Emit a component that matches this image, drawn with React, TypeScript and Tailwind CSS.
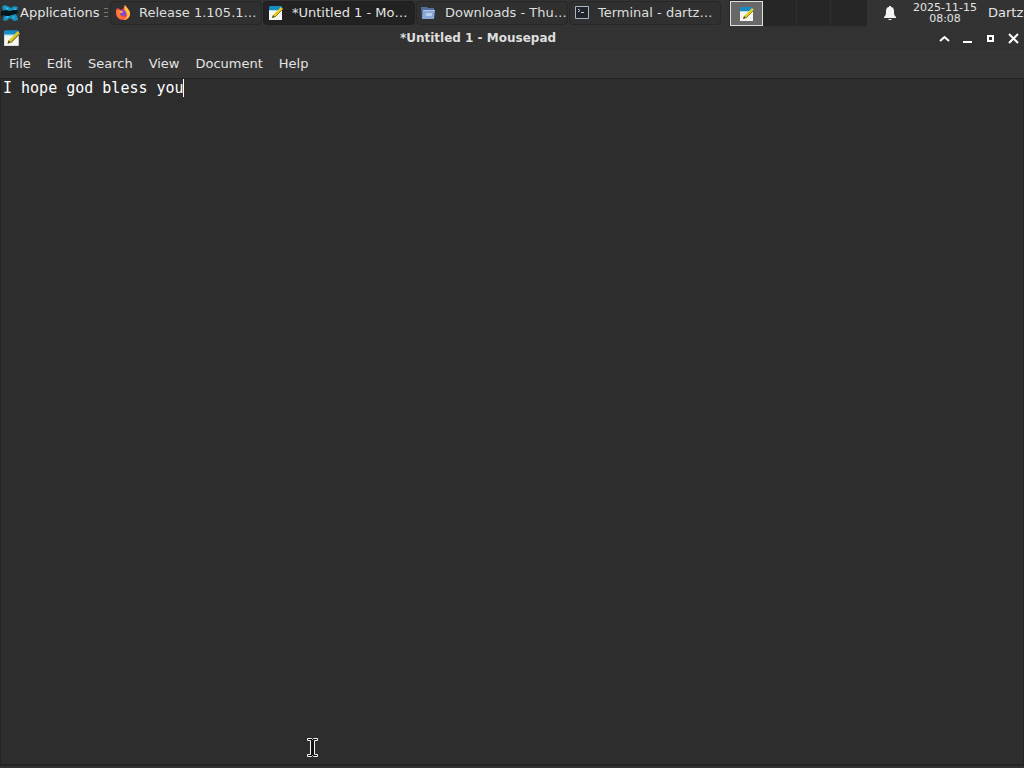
import { useState, type ReactNode } from "react";

function XfceLogo() {
  return (
    <svg width="18" height="18" viewBox="0 0 18 18" className="shrink-0" aria-hidden="true">
      <path d="M3 1l4 1 3 2 3-2 4 1-1 4-2 2 2 3 1 4-4 1-4-3-4 3-3-1 1-4 1-3-2-3-1-3z" fill="#1792bd" />
      <path d="M1 7l4-1 4 1 3-1 4 0 1 2-2 2-4 1-3 1-3 0-3-1-3 1 1-3z" fill="#06141c" />
      <path d="M4 3l3 1 1 2-3-1zM14 4l1 2-3 0zM5 14l1-2 2 0-1 2zM12 12l2 2-2 0z" fill="#3fc0e8" />
    </svg>
  );
}

function FirefoxLogo() {
  return (
    <svg width="16" height="16" viewBox="0 0 16 16" className="shrink-0" aria-hidden="true">
      <path d="M2 3l1 1 1-1 1 2 3-1 2-4 3 4 2 3v2c0 4-3 6-7 6s-7-3-7-7c0-2 0-3 1-5z" fill="#f43f5c" />
      <path d="M10 0l3 4c2 2 2 4 2 6-1 3-4 5-7 5 4-2 5-5 3-8-2-2-2-4-1-7z" fill="#ffc23a" />
      <path d="M2 4l2 1 3 1-2 2c0 4 4 5 6 3-2 4-7 4-9 0-1-3-1-5 0-7z" fill="#ff7830" />
      <circle cx="8" cy="8" r="3" fill="#7d4fd0" />
      <path d="M4 6l4 0-1 2-2 0z" fill="#ffb04a" />
    </svg>
  );
}

function NotepadIcon({ size = 16 }: { size?: number }) {
  return (
    <svg width={size} height={size} viewBox="0 0 16 16" className="shrink-0" aria-hidden="true">
      <path d="M1 2h13v13H1z" fill="#f7f7f2" />
      <path d="M2 1h11l1 1v3H1V2z" fill="#168bc4" />
      <path d="M1 5h13v1H1z" fill="#a9dcec" />
      <path d="M4 13l1-3 8-8 2 2-8 8z" fill="#e3cb2b" />
      <path d="M7 12l8-8" stroke="#8b7c22" />
      <path d="M4 13l1-3 2 2z" fill="#45432a" />
    </svg>
  );
}

function FolderIcon() {
  return (
    <svg width="16" height="16" viewBox="0 0 16 16" className="shrink-0" aria-hidden="true">
      <path d="M0 2h6l1 1h6v10H1z" fill="#526e9c" />
      <path d="M2 5h12l-1 9H1z" fill="#87a6d5" />
      <path d="M2 5h12v1H2z" fill="#b3c7e6" />
      <path d="M5 8h6v3H5z" fill="#b7cdec" />
    </svg>
  );
}

function TerminalIcon() {
  return (
    <svg width="16" height="16" viewBox="0 0 16 16" className="shrink-0" aria-hidden="true">
      <path d="M1.500 1.500h13v12h-13z" fill="#20252d" stroke="#aab4c4" />
      <path d="M4 4l2 1.500L4 7M7 7.500h3" fill="none" stroke="#c5cedb" />
    </svg>
  );
}

function BellIcon() {
  return (
    <svg width="14" height="16" viewBox="0 0 14 16" fill="#f4f4f4" aria-hidden="true">
      <path d="M6 1h2v1c2 0 3 2 3 4 0 3 0 4 2 6v1H1v-1c2-2 2-3 2-6 0-2 1-4 3-4zM5 14h4l-1 1H6z" />
    </svg>
  );
}

type TaskButtonProps = {
  icon: ReactNode;
  label: string;
  active?: boolean;
};

function TaskButton({ icon, label, active = false }: TaskButtonProps) {
  return (
    <button
      type="button"
      aria-pressed={active}
      className={
        active
          ? "flex h-6 min-w-0 flex-1 items-center gap-2 rounded-sm border border-[#1f1f1f] bg-[#222222] pl-1 text-[#e4e4e4]"
          : "flex h-6 min-w-0 flex-1 items-center gap-2 rounded-sm border border-[#272727] bg-[#303030] pl-1 text-[#dedede]"
      }
    >
      {icon}
      <span className="whitespace-nowrap">{label}</span>
    </button>
  );
}

function Panel() {
  return (
    <header className="flex h-[26px] shrink-0 items-center overflow-hidden bg-[#333333]">
      <button type="button" className="flex w-[103px] shrink-0 items-center gap-px pl-px">
        <XfceLogo />
        <span>Applications</span>
      </button>
      <svg width="6" height="12" viewBox="0 0 6 12" className="mr-px shrink-0" aria-hidden="true">
        <path d="M1 1.500h4M1 5.500h4M1 9.500h4" stroke="#777" />
      </svg>
      <nav aria-label="Open windows" className="flex max-w-[611px] min-w-0 flex-1 gap-px">
        <TaskButton icon={<FirefoxLogo />} label="Release 1.105.1…" />
        <TaskButton icon={<NotepadIcon />} label="*Untitled 1 - Mo…" active />
        <TaskButton icon={<FolderIcon />} label="Downloads - Thu…" />
        <TaskButton icon={<TerminalIcon />} label="Terminal - dartz…" />
      </nav>
      <div className="ml-2 flex h-full shrink-0 items-center bg-[#262626] pl-px">
        <button
          type="button"
          aria-label="Workspace 1"
          className="flex h-[25px] w-[33px] items-center justify-center self-end border border-[#dedede] bg-[#686868]"
        >
          <NotepadIcon />
        </button>
        <button type="button" aria-label="Workspace 2" className="h-full w-[34px] border-r border-[#2f2f2f]" />
        <button type="button" aria-label="Workspace 3" className="h-full w-[34px] border-r border-[#2f2f2f]" />
        <button type="button" aria-label="Workspace 4" className="h-full w-[36px]" />
      </div>
      <button type="button" aria-label="Notifications" className="ml-4 shrink-0">
        <BellIcon />
      </button>
      <time
        dateTime="2025-11-15T08:08"
        className="ml-4 w-16 shrink-0 text-center text-[11px] leading-[11px] whitespace-nowrap"
      >
        2025-11-15
        <br />
        08:08
      </time>
      <button type="button" className="ml-[11px] shrink-0">
        Dartz
      </button>
    </header>
  );
}

function TitleBar() {
  return (
    <div className="flex h-6 shrink-0 items-center bg-[#323232] pl-[3px]">
      <NotepadIcon size={18} />
      <h1 className="min-w-0 flex-1 pl-[2px] text-center text-[12px] font-bold text-[#dedede]">
        *Untitled 1 - Mousepad
      </h1>
      <div className="flex shrink-0 text-white">
        <button type="button" aria-label="Shade" className="flex w-[23px] justify-center">
          <svg width="11" height="11" viewBox="0 0 11 11" fill="none" stroke="currentColor" strokeWidth="2">
            <path d="M1 8l4.500-4L10 8" />
          </svg>
        </button>
        <button type="button" aria-label="Minimize" className="flex w-[23px] justify-center">
          <svg width="11" height="11" viewBox="0 0 11 11">
            <path d="M1 8h9v2H1z" fill="currentColor" />
          </svg>
        </button>
        <button type="button" aria-label="Maximize" className="flex w-[23px] justify-center">
          <svg width="11" height="11" viewBox="0 0 11 11" fill="none" stroke="currentColor" strokeWidth="2">
            <path d="M3 3h5v5H3z" />
          </svg>
        </button>
        <button type="button" aria-label="Close" className="flex w-[22px] justify-center">
          <svg width="11" height="11" viewBox="0 0 11 11" fill="none" stroke="currentColor" strokeWidth="2">
            <path d="M1 1l9 9M10 1l-9 9" />
          </svg>
        </button>
      </div>
    </div>
  );
}

const menus = ["File", "Edit", "Search", "View", "Document", "Help"];

function MenuBar() {
  return (
    <nav aria-label="Menu" className="flex h-7 shrink-0 items-center bg-[#353535] pb-px pl-px">
      {menus.map((menu) => (
        <button key={menu} type="button" className="px-2">
          {menu}
        </button>
      ))}
    </nav>
  );
}

function TextCursor() {
  return (
    <svg
      width="11"
      height="21"
      viewBox="0 0 11 21"
      className="pointer-events-none absolute bottom-[6px] left-[306px]"
      aria-hidden="true"
    >
      <path d="M.5 1.500h4l1 1 1-1h4v2h-3v14h3v2h-4l-1-1-1 1h-4v-2h3v-14h-3z" fill="#111" stroke="#f4f4f4" />
    </svg>
  );
}

function Editor() {
  const [text, setText] = useState("I hope god bless you");

  return (
    <main className="relative flex min-h-0 flex-1 border-x border-t border-b-2 border-[#242424] bg-[#2d2d2d]">
      <textarea
        aria-label="Document text"
        value={text}
        onChange={(event) => setText(event.target.value)}
        spellCheck={false}
        className="flex-1 resize-none bg-transparent px-[2px] font-['DejaVu_Sans_Mono',monospace] text-[15px] leading-[18px] text-white outline-none"
      />
      <span className="pointer-events-none absolute top-0 left-[182px] h-[18px] w-px bg-white" />
      <TextCursor />
    </main>
  );
}

export default function App() {
  return (
    <div className="flex h-screen flex-col overflow-hidden border-b-2 border-[#333133] bg-[#2d2d2d] font-['DejaVu_Sans',sans-serif] text-[13px] leading-4 text-[#e4e4e4]">
      <Panel />
      <TitleBar />
      <MenuBar />
      <Editor />
    </div>
  );
}
